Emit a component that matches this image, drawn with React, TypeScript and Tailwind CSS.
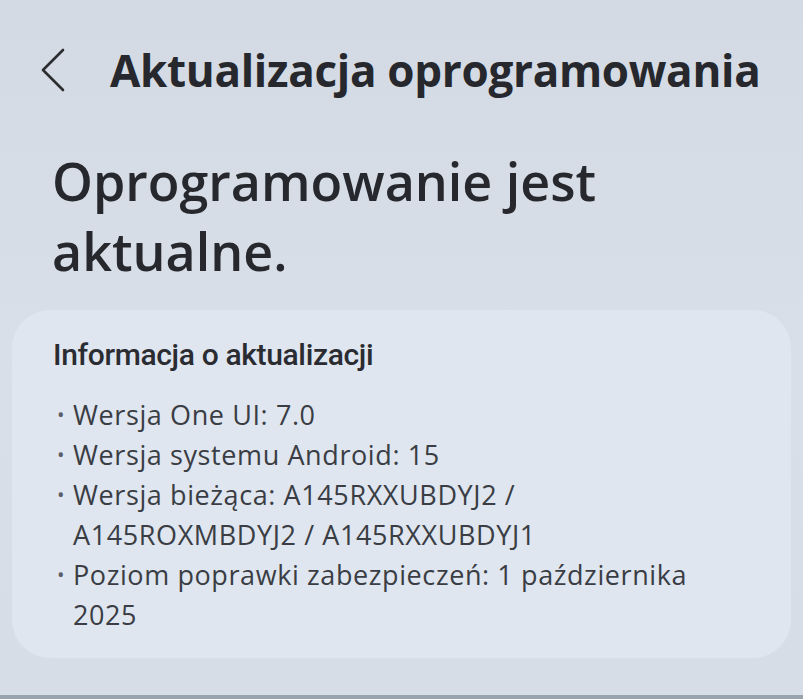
import React from 'react';

const items: string[][] = [
  ['Wersja One UI: 7.0'],
  ['Wersja systemu Android: 15'],
  ['Wersja bieżąca: A145RXXUBDYJ2 /', 'A145ROXMBDYJ2 / A145RXXUBDYJ1'],
  ['Poziom poprawki zabezpieczeń: 1 października', '2025'],
];

export default function App() {
  return (
    <div className="w-[803px] h-[699px] overflow-hidden flex flex-col bg-gradient-to-b from-[#d3dae3] via-[#d8dfe8] to-[#d6dde7] text-[#26282d]">
      {/* Header */}
      <div className="flex items-center h-[60px] mt-[40px]">
        <button className="ml-[40px] w-[26px] h-[44px] flex items-center justify-center">
          <svg width="24" height="44" viewBox="0 0 24 44" fill="none">
            <path d="M22 2 L2 22 L22 42" stroke="#2b2d31" strokeWidth="2.6" strokeLinecap="round" strokeLinejoin="round" />
          </svg>
        </button>
        <h1 className="ml-[44px] font-['Open_Sans',sans-serif] font-bold text-[44px] tracking-[-0.3px] leading-none">
          Aktualizacja oprogramowania
        </h1>
      </div>

      {/* Status */}
      <h2 className="ml-[52px] mt-[46px] font-['Open_Sans',sans-serif] font-semibold text-[52px] leading-[70px]">
        Oprogramowanie jest
        <br />
        aktualne.
      </h2>

      {/* Info card */}
      <section className="mx-[12px] mt-[24px] h-[348px] rounded-[38px] bg-[#dfe6ef] pt-[25px] pl-[41px] pr-[20px]">
        <h3 className="font-['Roboto',sans-serif] font-medium text-[30px] leading-[40px] text-[#2a2c31] tracking-[-0.35px]">
          Informacja o aktualizacji
        </h3>
        <ul className="mt-[20px] font-['Open_Sans',sans-serif] text-[27px] tracking-[0.6px] leading-[40px] text-[#3a3d44]">
          {items.map((lines, i) => (
            <li key={i} className="relative pl-[20px]">
              <span className="absolute left-[4px] top-0 text-[20px] text-[#5a5e66]">•</span>
              {lines.map((l, j) => (
                <div key={j}>{l}</div>
              ))}
            </li>
          ))}
        </ul>
      </section>

      <div className="mt-auto h-[4px] bg-[#98a3b0]" />
    </div>
  );
}
